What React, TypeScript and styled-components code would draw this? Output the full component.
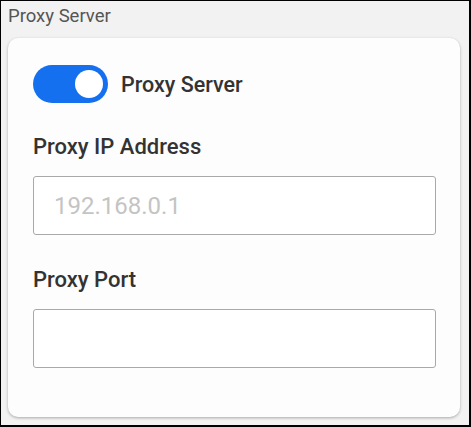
import React, { useState } from 'react';
import styled, { createGlobalStyle } from 'styled-components';

const GlobalStyle = createGlobalStyle`
  html, body {
    margin: 0;
    padding: 0;
  }
  body {
    font-family: Roboto, "Liberation Sans", sans-serif;
    background: #000;
  }
`;

const Frame = styled.div`
  box-sizing: border-box;
  width: 471px;
  height: 427px;
  border: 1px solid #000;
  border-bottom-width: 2px;
  border-right-width: 2px;
  background: #f2f2f2;
  display: flex;
  flex-direction: column;
  padding: 3px 9px 8px 7px;
`;

const Caption = styled.div`
  font-size: 18.5px;
  line-height: 24px;
  color: #555;
  margin-bottom: 10px;
`;

const Card = styled.div`
  flex: 1;
  background: #fdfdfd;
  border-radius: 10px;
  box-shadow: 0 1px 3px rgba(0, 0, 0, 0.3);
  padding: 27px 25px 0 25px;
  display: flex;
  flex-direction: column;
`;

const ToggleRow = styled.label`
  display: flex;
  align-items: center;
  gap: 13px;
  cursor: pointer;
`;

const Track = styled.span<{ $on: boolean }>`
  position: relative;
  width: 75px;
  height: 38px;
  border-radius: 19px;
  background: ${({ $on }) => ($on ? '#1570ef' : '#bbb')};
  flex-shrink: 0;
`;

const Knob = styled.span<{ $on: boolean }>`
  position: absolute;
  top: 5px;
  left: ${({ $on }) => ($on ? '42px' : '5px')};
  width: 28px;
  height: 28px;
  border-radius: 50%;
  background: #fff;
`;

const ToggleText = styled.span`
  font-size: 21.5px;
  font-weight: 500;
  color: #333;
`;

const Field = styled.div`
  display: flex;
  flex-direction: column;
  margin-top: 31px;

  & + & {
    margin-top: 32px;
  }
`;

const FieldLabel = styled.div`
  font-size: 22px;
  font-weight: 500;
  color: #333;
  line-height: 26px;
  margin-bottom: 16px;
`;

const Input = styled.input`
  box-sizing: border-box;
  width: 403px;
  height: 59px;
  border: 1px solid #a9a9a9;
  border-radius: 3px;
  background: #fff;
  padding: 0 20px;
  font-family: inherit;
  font-size: 24px;
  color: #333;
  outline: none;
  &::placeholder {
    color: #c4c4c4;
  }
`;

export default function App() {
  const [on, setOn] = useState(true);
  return (
    <>
      <GlobalStyle />
      <Frame>
        <Caption>Proxy Server</Caption>
        <Card>
          <ToggleRow onClick={() => setOn(!on)}>
            <Track $on={on}>
              <Knob $on={on} />
            </Track>
            <ToggleText>Proxy Server</ToggleText>
          </ToggleRow>
          <Field>
            <FieldLabel>Proxy IP Address</FieldLabel>
            <Input placeholder="192.168.0.1" />
          </Field>
          <Field>
            <FieldLabel>Proxy Port</FieldLabel>
            <Input />
          </Field>
        </Card>
      </Frame>
    </>
  );
}
